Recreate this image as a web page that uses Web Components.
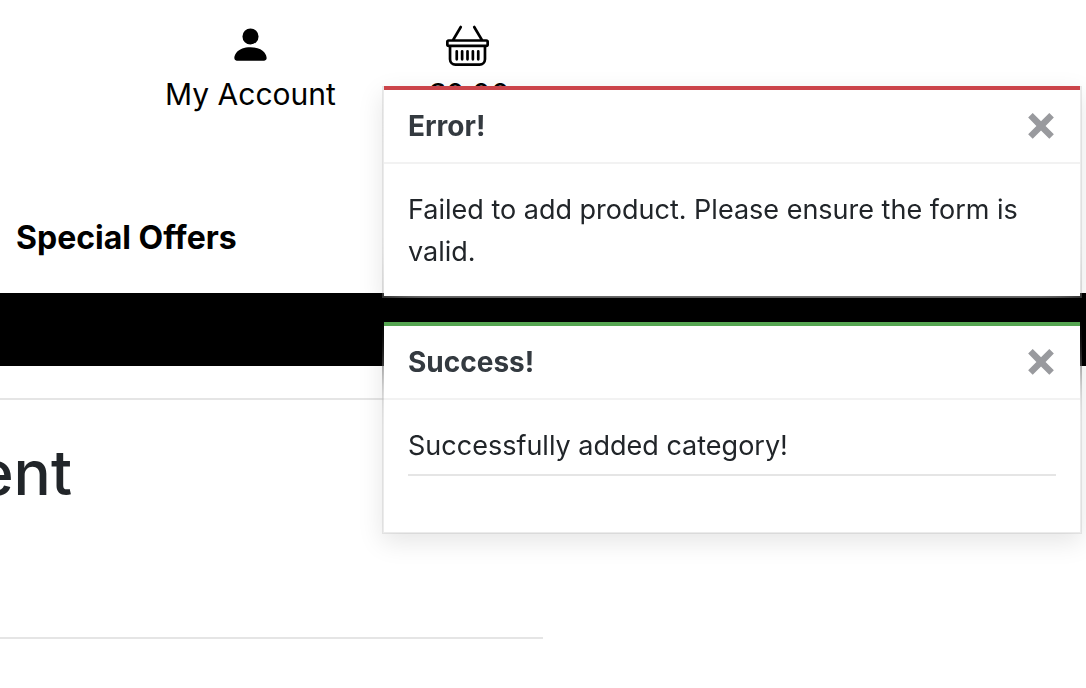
<!DOCTYPE html>
<html lang="en">
<head>
<meta charset="utf-8">
<meta name="viewport" content="width=device-width, initial-scale=1">
<title>Shop</title>
<style>
  body { margin: 0; background: #fff; color: #212529; font-family: Inter, "Liberation Sans", sans-serif; font-size: 27px; line-height: 42px; overflow-x: hidden; }
</style>
</head>
<body>
<shop-header>
  <header-link href="#account">
    <svg slot="icon" viewBox="0 0 16 16" fill="currentColor" aria-hidden="true"><path d="M3 14s-1 0-1-1 1-4 6-4 6 3 6 4-1 1-1 1H3Zm5-6a3 3 0 1 0 0-6 3 3 0 0 0 0 6Z"/></svg>
    My Account
  </header-link>
  <header-link href="#basket">
    <svg slot="icon" viewBox="0 0 16 16" fill="currentColor" aria-hidden="true"><path d="M5.757 1.071a.5.5 0 0 1 .172.686L3.383 6h9.234L10.07 1.757a.5.5 0 1 1 .858-.514L13.783 6H15a1 1 0 0 1 1 1v1a1 1 0 0 1-1 1v4.5a2.5 2.5 0 0 1-2.5 2.5h-9A2.5 2.5 0 0 1 1 13.5V9a1 1 0 0 1-1-1V7a1 1 0 0 1 1-1h1.217L5.07 1.243a.5.5 0 0 1 .686-.172zM2 9v4.5A1.5 1.5 0 0 0 3.5 15h9a1.5 1.5 0 0 0 1.5-1.5V9H2zM1 7v1h14V7H1zm3 3a.5.5 0 0 1 .5.5v3a.5.5 0 0 1-1 0v-3A.5.5 0 0 1 4 10zm2 0a.5.5 0 0 1 .5.5v3a.5.5 0 0 1-1 0v-3A.5.5 0 0 1 6 10zm2 0a.5.5 0 0 1 .5.5v3a.5.5 0 0 1-1 0v-3A.5.5 0 0 1 8 10zm2 0a.5.5 0 0 1 .5.5v3a.5.5 0 0 1-1 0v-3a.5.5 0 0 1 .5-.5zm2 0a.5.5 0 0 1 .5.5v3a.5.5 0 0 1-1 0v-3a.5.5 0 0 1 .5-.5z"/></svg>
    €0.00
  </header-link>
  <a slot="nav" href="#offers">Special Offers</a>
</shop-header>
<page-content><span slot="title">ent</span></page-content>
<toast-stack>
  <toast-message kind="error" heading="Error!">Failed to add product. Please ensure the form is valid.</toast-message>
  <toast-message kind="success" heading="Success!">Successfully added category!<toast-rule></toast-rule></toast-message>
</toast-stack>
<script>
class BaseElement extends HTMLElement {
  constructor() {
    super();
    this.attachShadow({ mode: "open" }).innerHTML = this.constructor.markup;
  }
}

customElements.define("shop-header", class extends BaseElement {
  static markup = `
    <style>
      :host { display: block; color: #000; }
      .links { display: flex; gap: 90px; padding: 23px 0 0 165px; }
      nav { display: flex; padding: 96px 16px 31px; }
      ::slotted(a) { color: inherit; text-decoration: none; font-size: 32px; line-height: 48px; font-weight: 700; }
      .bar { height: 73px; background: #000; }
    </style>
    <header><div class="links"><slot></slot></div>
    <nav><slot name="nav"></slot></nav>
    <div class="bar"></div></header>`;
});

customElements.define("header-link", class extends BaseElement {
  static markup = `
    <style>
      :host { display: block; }
      a { display: flex; flex-direction: column; align-items: center; gap: 4px; color: inherit; text-decoration: none; font-size: 30px; line-height: 48px; white-space: nowrap; }
      ::slotted(svg) { display: block; width: 43px; height: 43px; }
    </style>
    <a><slot name="icon"></slot><span><slot></slot></span></a>`;
  connectedCallback() {
    this.shadowRoot.querySelector("a").href = this.getAttribute("href");
  }
});

customElements.define("page-content", class extends BaseElement {
  static markup = `
    <style>
      :host { display: block; padding-top: 32px; }
      hr { width: 50%; margin: 0; border: 0; border-top: 2px solid #e5e5e5; }
      h1 { display: flex; justify-content: flex-end; width: 72px; margin: 0; padding: 34px 0 126px; font-size: 62px; line-height: 77px; font-weight: 500; }
    </style>
    <main><hr><h1><slot name="title"></slot></h1><hr></main>`;
});

customElements.define("toast-stack", class extends BaseElement {
  static markup = `
    <style>
      :host { position: absolute; top: 86px; right: 4px; width: 700px; max-width: 100%; display: flex; flex-direction: column; gap: 24px; }
    </style>
    <slot></slot>`;
});

customElements.define("toast-rule", class extends BaseElement {
  static markup = `
    <style>
      :host { display: block; }
      hr { margin: 7px 0 33px; border: 0; border-top: 2px solid #e5e5e5; }
    </style>
    <hr>`;
});

customElements.define("toast-message", class extends BaseElement {
  static markup = `
    <style>
      :host { display: block; --accent: #cb444a; border: 2px solid rgba(0,0,0,.08); border-top: 0; background: #fff; background-clip: padding-box; box-shadow: 0 8px 24px rgba(0,0,0,.1); backdrop-filter: blur(24px); }
      :host([kind="success"]) { --accent: #55a551; }
      header { display: flex; align-items: center; justify-content: space-between; height: 72px; padding: 0 22px 0 24px; border-top: 4px solid var(--accent); border-bottom: 2px solid #f2f2f2; color: #343a40; }
      strong { font-size: 28px; font-weight: 700; }
      button { margin: 0; padding: 0 0 8px; border: 0; background: none; font: inherit; font-size: 50px; line-height: 42px; font-weight: 700; color: #999a9e; cursor: pointer; }
      .body { padding: 25px 24px 23px; }
    </style>
    <section role="alert">
      <header><strong></strong><button type="button" aria-label="Close">×</button></header>
      <div class="body"><slot></slot></div>
    </section>`;
  connectedCallback() {
    this.shadowRoot.querySelector("strong").textContent = this.getAttribute("heading");
  }
});
</script>
</body>
</html>
